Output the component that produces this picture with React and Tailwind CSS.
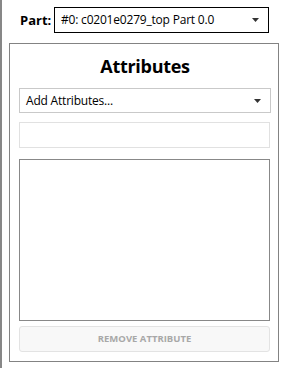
import React from 'react';

function Caret() {
  return (
    <svg width="7" height="4" viewBox="0 0 7 4" className="shrink-0">
      <path d="M0 0h7L3.5 4z" fill="#333" />
    </svg>
  );
}

export default function App() {
  return (
    <div className="w-[281px] h-[368px] bg-white flex font-['Open_Sans','Noto_Sans',sans-serif] text-black overflow-hidden">
      {/* left splitter edge */}
      <div className="w-[2px] h-full bg-[#878787]" />

      <div className="flex-1 flex flex-col">
        {/* Part selector */}
        <div className="flex items-center pt-[7px] pl-[18px]">
          <span className="text-[13px] font-bold leading-none w-[34px]">Part:</span>
          <div className="w-[215px] h-[26px] border border-black flex items-center justify-between pl-[6px] pr-[9px]">
            <span className="text-[12px] leading-none tracking-[-0.2px]">#0: c0201e0279_top Part 0.0</span>
            <Caret />
          </div>
        </div>

        {/* Attributes panel */}
        <div className="mt-[10px] ml-[7px] w-[270px] h-[319px] border border-[#838383] flex flex-col pl-[9px] pr-[7px]">
          <h1 className="text-[18px] font-bold text-center leading-none mt-[13px] h-[31px] tracking-[-0.3px]">Attributes</h1>

          <div className="w-[252px] h-[25px] border border-[#c9c9c9] flex items-center justify-between pl-[6px] pr-[9px]">
            <span className="text-[12px] leading-none tracking-[-0.2px]">Add Attributes...</span>
            <Caret />
          </div>

          <div className="mt-[9px] w-[251px] h-[26px] border border-[#e1e1e1]" />

          <div className="mt-[11px] w-[251px] h-[162px] border border-[#888888]" />

          <button className="mt-[5px] w-[251px] h-[26px] border border-[#e3e3e3] bg-[#f8f8f8] rounded-[3px] flex items-center justify-center">
            <span className="text-[9.5px] font-bold text-[#a8a8a8] leading-none">REMOVE ATTRIBUTE</span>
          </button>
        </div>
      </div>
    </div>
  );
}
